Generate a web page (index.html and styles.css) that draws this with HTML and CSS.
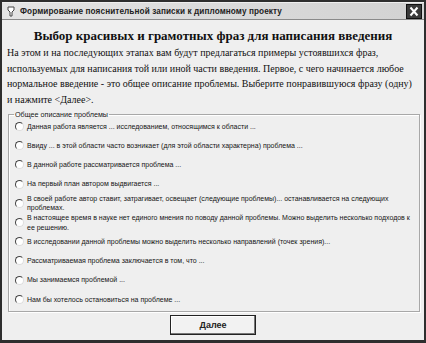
FILE: index.html
```html
<!DOCTYPE html>
<html lang="ru">
<head>
<meta charset="utf-8">
<title>Формирование пояснительной записки к дипломному проекту</title>
<link rel="stylesheet" href="styles.css">
</head>
<body>
<div class="window">
  <div class="titlebar">
    <svg class="app-icon" width="10" height="11" viewBox="0 0 10 11">
      <path d="M2 1 L8 1 L8 4 L6 6 L6 10 L4 10 L4 6 L2 4 Z" fill="#fff" stroke="#444" stroke-width="1"/>
    </svg>
    <span class="title">Формирование пояснительной записки к дипломному проекту</span>
    <span class="close">
      <svg width="14" height="13" viewBox="0 0 14 13">
        <path d="M3.5 2.5 L10.5 10.5 M10.5 2.5 L3.5 10.5" stroke="#fff" stroke-width="2"/>
      </svg>
    </span>
  </div>
  <div class="client">
    <h1 class="heading">Выбор красивых и грамотных фраз для написания введения</h1>
    <p class="intro">На этом и на последующих этапах вам будут предлагаться примеры устоявшихся фраз, используемых для написания той или иной части введения. Первое, с чего начинается любое нормальное введение - это общее описание проблемы. Выберите понравившуюся фразу (одну) и нажмите &lt;Далее&gt;.</p>
    <fieldset class="group">
      <legend class="legend">Общее описание проблемы</legend>
      <label class="opt"><span class="radio"></span><span class="opt-text">Данная работа является ... исследованием, относящимся к области ...</span></label>
      <label class="opt"><span class="radio"></span><span class="opt-text">Ввиду ... в этой области часто возникает (для этой области характерна) проблема ...</span></label>
      <label class="opt"><span class="radio"></span><span class="opt-text">В данной работе рассматривается проблема ...</span></label>
      <label class="opt"><span class="radio"></span><span class="opt-text">На первый план автором выдвигается ...</span></label>
      <label class="opt"><span class="radio"></span><span class="opt-text">В своей работе автор ставит, затрагивает, освещает (следующие проблемы)... останавливается на следующих проблемах.</span></label>
      <label class="opt"><span class="radio"></span><span class="opt-text">В настоящее время в науке нет единого мнения по поводу данной проблемы. Можно выделить несколько подходов к ее решению.</span></label>
      <label class="opt"><span class="radio"></span><span class="opt-text">В исследовании данной проблемы можно выделить несколько направлений (точек зрения)...</span></label>
      <label class="opt"><span class="radio"></span><span class="opt-text">Рассматриваемая проблема заключается в том, что ...</span></label>
      <label class="opt"><span class="radio"></span><span class="opt-text">Мы занимаемся проблемой ...</span></label>
      <label class="opt"><span class="radio"></span><span class="opt-text">Нам бы хотелось остановиться на проблеме ...</span></label>
    </fieldset>
    <div class="actions">
      <button class="btn" type="button">Далее</button>
    </div>
  </div>
</div>
</body>
</html>
```

FILE: styles.css
```css
* { box-sizing: border-box; }
html, body { margin: 0; padding: 0; background: #2a2a2a; }
.window {
  width: 426px;
  height: 343px;
  border: 2px solid #2e2e2e;
  border-bottom-width: 3px;
  background: #efefef;
  display: flex;
  flex-direction: column;
}
.titlebar {
  height: 17px;
  margin-top: 1px;
  background: linear-gradient(to right, #e4e4e4, #d2d2d2);
  border-bottom: 1px solid #8a8a8a;
  display: flex;
  align-items: center;
  padding: 0 2px 0 4px;
  gap: 4px;
  font-family: "Liberation Sans", Arial, sans-serif;
  font-weight: bold;
  font-size: 8.2px;
  color: #222;
}
.title { flex: 1; letter-spacing: 0.1px; }
.close {
  width: 16px;
  height: 15px;
  background: #3a3a3a;
  border: 1px solid #111;
  display: flex;
  align-items: center;
  justify-content: center;
}
.client {
  flex: 1;
  display: flex;
  flex-direction: column;
  padding: 0 4px 0 4px;
}
.heading {
  margin: 7px 0 0;
  text-align: center;
  font-family: "Liberation Serif", "Times New Roman", serif;
  font-weight: bold;
  font-size: 13px;
  line-height: 18px;
  color: #111;
}
.intro {
  margin: 0 0 0 1px;
  padding-right: 6px;
  font-family: "Liberation Serif", "Times New Roman", serif;
  font-size: 10px;
  line-height: 15.5px;
  color: #111;
}
.group {
  margin: 3px 0 0 2px;
  padding: 0 3px 2px 6px;
  border: 1px solid #a8a8a8;
  box-shadow: inset 1px 1px 0 #fff, 1px 1px 0 #fff;
  font-family: "Liberation Sans", Arial, sans-serif;
  font-size: 7px;
  color: #151515;
}
.legend {
  padding: 0 1px;
  margin-left: -1px;
  font-size: 7.2px;
  line-height: 9px;
}
.opt {
  display: flex;
  align-items: center;
  height: 19.2px;
  gap: 3px;
  line-height: 9.5px;
}
.opt:first-of-type { margin-top: -2px; }
.radio {
  flex: none;
  width: 9px;
  height: 9px;
  border-radius: 50%;
  background: #fff;
  border: 1px solid;
  border-color: #444 #ddd #ddd #444;
}
.opt-text { flex: 1; }
.actions {
  display: flex;
  justify-content: center;
  padding-top: 3px;
}
.btn {
  width: 86px;
  height: 20px;
  background: #f2f2f2;
  border: 1px solid #222;
  box-shadow: inset -1px -1px 0 #777, inset 1px 1px 0 #fff;
  font-family: "Liberation Sans", Arial, sans-serif;
  font-weight: bold;
  font-size: 9px;
  color: #222;
  padding: 0;
}
```
